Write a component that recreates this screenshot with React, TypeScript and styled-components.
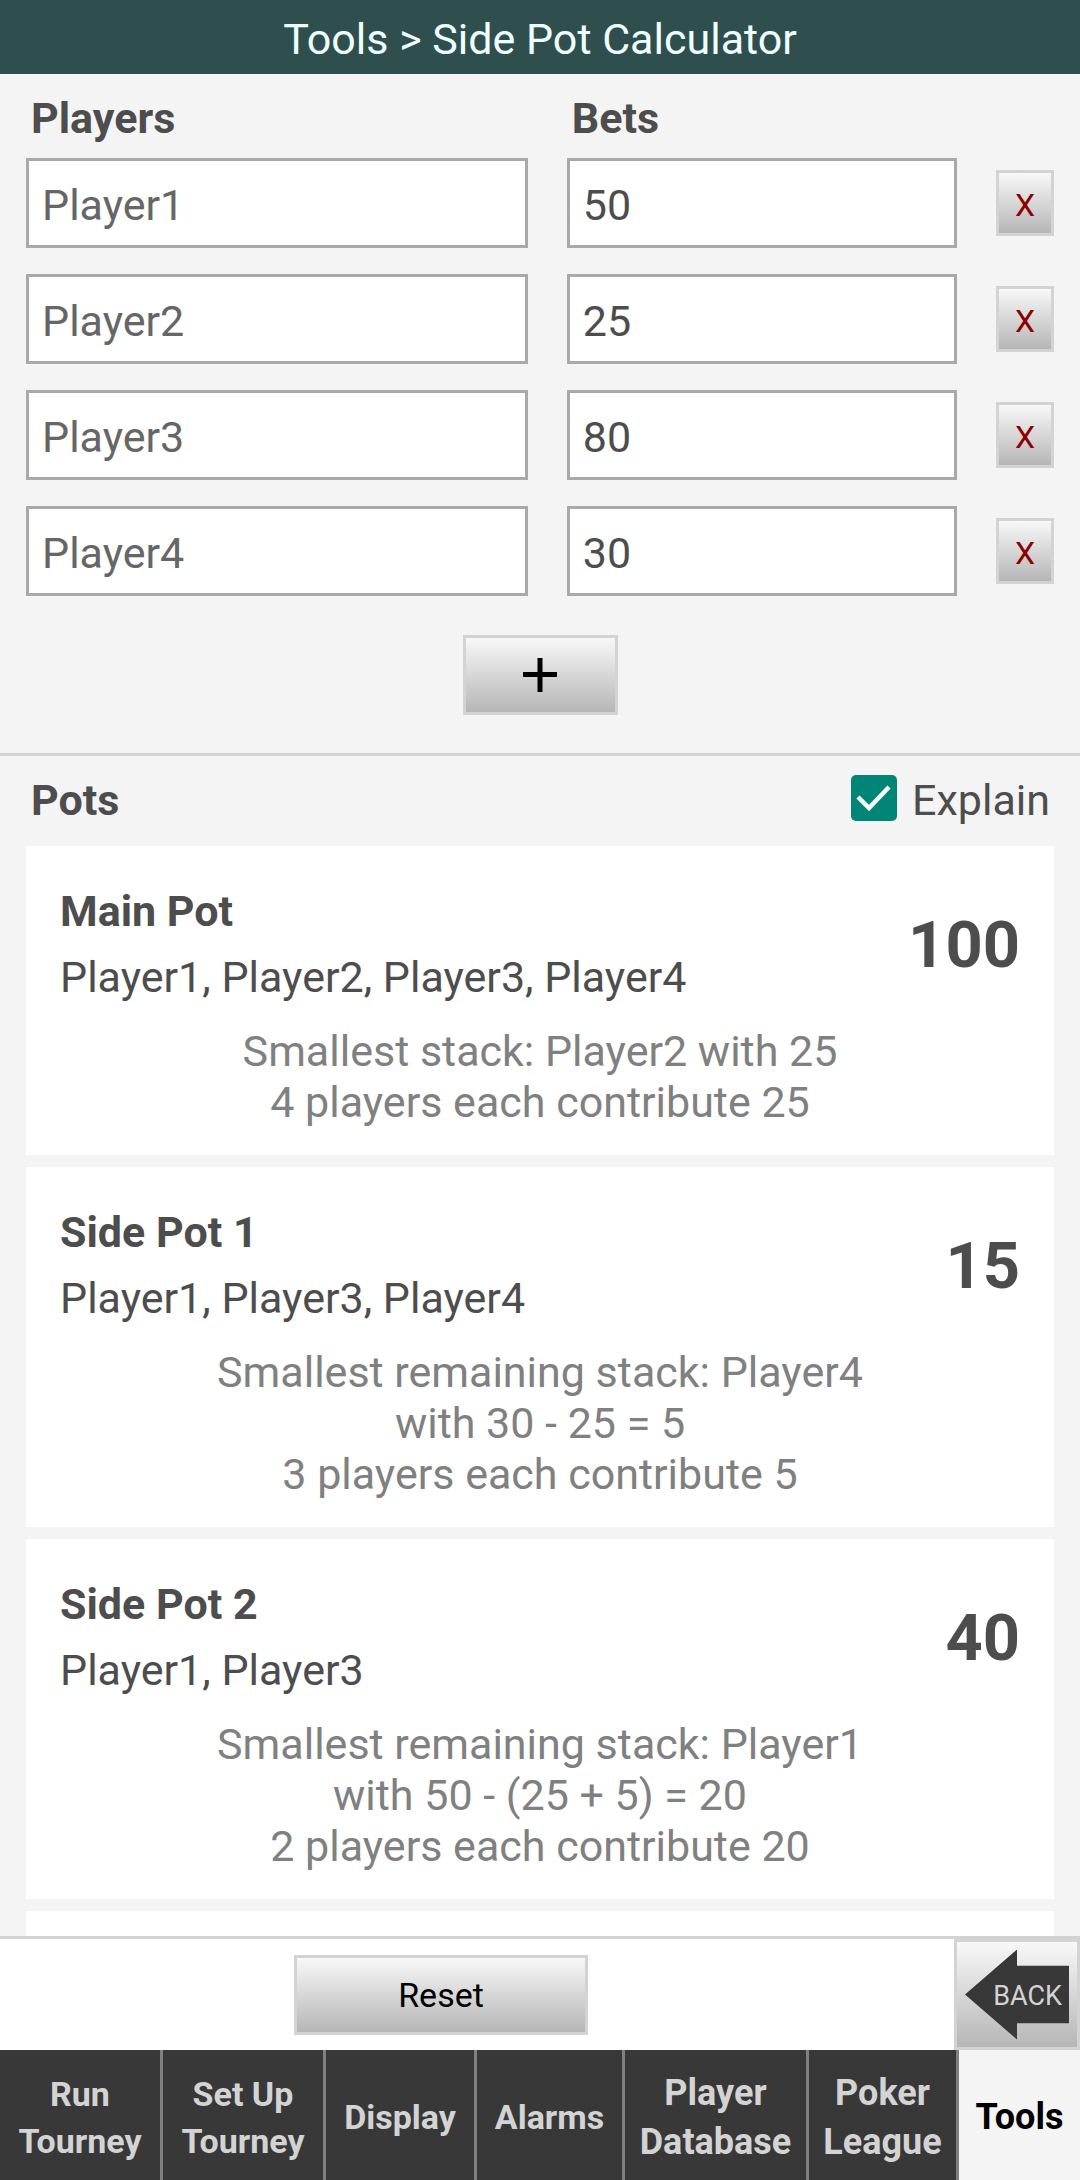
import React, { useState } from "react";
import styled, { createGlobalStyle, css } from "styled-components";

const GlobalStyle = createGlobalStyle`
  *, *::before, *::after { box-sizing: border-box; }
  body {
    margin: 0;
    background: #f4f4f4;
    color: #4d4d4d;
    font-family: Roboto, "Noto Sans", sans-serif;
    font-size: 43px;
    line-height: 51px;
  }
  button, input { font: inherit; margin: 0; border-radius: 0; }
`;

const Screen = styled.div`
  display: flex;
  flex-direction: column;
  height: 100vh;
`;

const TitleBar = styled.header`
  flex: none;
  padding: 14px 24px 10px;
  background: #2f4f4f;
  text-align: center;
`;

const Title = styled.h1`
  margin: 0;
  font: inherit;
  line-height: 50px;
  color: #f0ffff;
`;

const Content = styled.main`
  flex: 1;
  min-height: 0;
  overflow-y: auto;
  scrollbar-width: none;
`;

const BetsSection = styled.section`
  display: flex;
  flex-direction: column;
  padding: 18px 26px 38px;
  border-bottom: 3px solid #d3d3d3;
`;

const EntryGrid = styled.div`
  display: grid;
  grid-template-columns: 9fr 7fr 58px;
  column-gap: 39px;
  row-gap: 26px;
  align-items: center;
`;

const HeadingGrid = styled(EntryGrid)`
  padding-bottom: 14px;
`;

const Heading = styled.h2`
  margin: 0;
  padding-left: 5px;
  font-size: 43px;
  line-height: 52px;
  font-weight: 700;
`;

const Field = styled.input`
  width: 100%;
  min-width: 0;
  height: 90px;
  padding: 4px 13px 0;
  border: 3px solid #a9a9a9;
  background: #fff;
  color: #4d4d4d;
  outline: none;

  &::placeholder {
    color: #666;
    opacity: 1;
  }
`;

const raised = css`
  border: 3px solid #d3d3d3;
  background: linear-gradient(#f8f8f8, #b6b6b6);
  color: #000;
  cursor: pointer;
`;

const RemoveButton = styled.button`
  ${raised}
  height: 66px;
  padding: 3px 0 0;
  font-size: 32px;
  line-height: 40px;
  color: #8b0000;
`;

const AddButton = styled.button`
  ${raised}
  display: grid;
  place-items: center;
  align-self: center;
  width: 155px;
  height: 80px;
  margin-top: 39px;
  padding: 0;
`;

const PotsSection = styled.section`
  padding: 16px 26px 12px;
`;

const PotsHeader = styled.div`
  display: flex;
  align-items: center;
  justify-content: space-between;
  padding: 2px 4px 20px 0;
`;

const ExplainLabel = styled.label`
  display: flex;
  align-items: flex-start;
  gap: 15px;
  cursor: pointer;
`;

const CheckFrame = styled.span`
  display: grid;
  width: 46px;
  height: 46px;

  > * { grid-area: 1 / 1; }
`;

const CheckInput = styled.input`
  appearance: none;
  width: 46px;
  height: 46px;
  border: 5px solid #757575;
  border-radius: 5px;

  &:checked {
    border: 0;
    background: #008577;
  }
`;

const CheckMark = styled.svg`
  pointer-events: none;
`;

const PotList = styled.div`
  display: flex;
  flex-direction: column;
  gap: 12px;
`;

const PotCard = styled.article`
  padding: 40px 34px 27px;
  background: #fff;
`;

const PotTop = styled.div`
  display: flex;
  align-items: center;
  justify-content: space-between;
  gap: 24px;
`;

const PotInfo = styled.div`
  display: flex;
  flex-direction: column;
  gap: 15px;
`;

const PotName = styled.h3`
  margin: 0;
  font-size: 43px;
  line-height: 51px;
  font-weight: 700;
`;

const PotPlayers = styled.p`
  margin: 0;
`;

const PotTotal = styled.strong`
  font-size: 65px;
  line-height: 76px;
`;

const Explanation = styled.div`
  max-width: 70%;
  margin: 23px auto 0;
  text-align: center;
  color: #808080;
`;

const ExplanationLine = styled.p`
  margin: 0;
`;

const ActionBar = styled.div`
  flex: none;
  display: flex;
  border-top: 3px solid #d3d3d3;
  background: #fff;
`;

const Actions = styled.div`
  flex: 1;
  display: flex;
  align-items: center;
  justify-content: center;
  padding-right: 72px;
`;

const ResetButton = styled.button`
  ${raised}
  width: 294px;
  height: 80px;
  font-size: 34px;
  line-height: 40px;
`;

const BackButton = styled.button`
  ${raised}
  display: grid;
  place-items: center;
  width: 126px;
  height: 111px;
  padding: 0;
`;

const BackArrow = styled.span`
  width: 104px;
  height: 90px;
  padding-right: 7px;
  background: #383838;
  clip-path: polygon(0 50%, 50% 0, 50% 18%, 100% 18%, 100% 82%, 50% 82%, 50% 100%);
  color: #d3d3d3;
  font-size: 27px;
  line-height: 92px;
  text-align: right;
`;

const Tabs = styled.nav`
  flex: none;
  display: grid;
  grid-template-columns: 163fr 163fr 151fr 148fr 184fr 150fr 121fr;
  height: 130px;
  background: #383838;
`;

const Tab = styled.a<{ $active?: boolean; $large?: boolean }>`
  display: flex;
  align-items: center;
  justify-content: center;
  padding: 5px 8px 0;
  border-right: ${(p) => (p.$active ? "0" : "3px solid #808080")};
  background: ${(p) => (p.$active ? "#f4f4f4" : "#383838")};
  color: ${(p) => (p.$active ? "#000" : "#d3d3d3")};
  font-size: ${(p) => (p.$large ? "36px" : "34px")};
  line-height: ${(p) => (p.$large ? "49px" : "47px")};
  font-weight: 700;
  text-align: center;
  text-decoration: none;
`;

interface Entry {
  id: number;
  name: string;
  bet: string;
}

interface Pot {
  title: string;
  players: string[];
  total: number;
  notes: string[];
}

const initialEntries: Entry[] = [
  { id: 1, name: "", bet: "50" },
  { id: 2, name: "", bet: "25" },
  { id: 3, name: "", bet: "80" },
  { id: 4, name: "", bet: "30" },
];

const tabs = [
  { label: "Run Tourney" },
  { label: "Set Up Tourney" },
  { label: "Display" },
  { label: "Alarms" },
  { label: "Player Database", large: true },
  { label: "Poker League", large: true },
  { label: "Tools", large: true, active: true },
];

function calculatePots(entries: Entry[]): Pot[] {
  const stacks = entries.map((entry, index) => ({
    name: entry.name || `Player${index + 1}`,
    bet: Number(entry.bet) || 0,
  }));
  const levels = [...new Set(stacks.map((s) => s.bet))]
    .filter((bet) => bet > 0)
    .sort((a, b) => a - b);
  const taken: number[] = [];

  // A level reached by one player only is not contested, so it is no pot.
  return levels
    .filter((level) => stacks.filter((s) => s.bet >= level).length > 1)
    .map((level, index) => {
      const spent = taken.reduce((sum, n) => sum + n, 0);
      const share = level - spent;
      const inPot = stacks.filter((s) => s.bet >= level);
      const smallest = stacks.find((s) => s.bet === level)!;
      const deduction = taken.length > 1 ? `(${taken.join(" + ")})` : `${spent}`;
      const first =
        index === 0
          ? `Smallest stack: ${smallest.name} with ${level}`
          : `Smallest remaining stack: ${smallest.name} with ${level} - ${deduction} = ${share}`;
      taken.push(share);
      return {
        title: index === 0 ? "Main Pot" : `Side Pot ${index}`,
        players: inPot.map((s) => s.name),
        total: share * inPot.length,
        notes: [first, `${inPot.length} players each contribute ${share}`],
      };
    });
}

export default function App() {
  const [entries, setEntries] = useState(initialEntries);
  const [explain, setExplain] = useState(true);

  const update = (id: number, change: Partial<Entry>) =>
    setEntries((list) => list.map((e) => (e.id === id ? { ...e, ...change } : e)));
  const remove = (id: number) => setEntries((list) => list.filter((e) => e.id !== id));
  const add = () =>
    setEntries((list) => [
      ...list,
      { id: Math.max(0, ...list.map((e) => e.id)) + 1, name: "", bet: "" },
    ]);

  return (
    <Screen>
      <GlobalStyle />
      <TitleBar>
        <Title>Tools &gt; Side Pot Calculator</Title>
      </TitleBar>

      <Content>
        <BetsSection>
          <HeadingGrid>
            <Heading>Players</Heading>
            <Heading>Bets</Heading>
          </HeadingGrid>
          <EntryGrid>
            {entries.map((entry, index) => (
              <React.Fragment key={entry.id}>
                <Field
                  aria-label={`Name of player ${index + 1}`}
                  placeholder={`Player${index + 1}`}
                  value={entry.name}
                  onChange={(e) => update(entry.id, { name: e.target.value })}
                />
                <Field
                  aria-label={`Bet of player ${index + 1}`}
                  inputMode="numeric"
                  value={entry.bet}
                  onChange={(e) => update(entry.id, { bet: e.target.value })}
                />
                <RemoveButton
                  type="button"
                  aria-label={`Remove player ${index + 1}`}
                  onClick={() => remove(entry.id)}
                >
                  X
                </RemoveButton>
              </React.Fragment>
            ))}
          </EntryGrid>
          <AddButton type="button" aria-label="Add player" onClick={add}>
            <svg width="36" height="36" viewBox="0 0 36 36" aria-hidden="true">
              <path d="M18 1v34M1 17.5h34" stroke="#000" strokeWidth="5" />
            </svg>
          </AddButton>
        </BetsSection>

        <PotsSection>
          <PotsHeader>
            <Heading>Pots</Heading>
            <ExplainLabel>
              <CheckFrame>
                <CheckInput
                  type="checkbox"
                  checked={explain}
                  onChange={(e) => setExplain(e.target.checked)}
                />
                {explain && (
                  <CheckMark width="46" height="46" viewBox="0 0 46 46" aria-hidden="true">
                    <path d="M7 22l11 11L38 12" fill="none" stroke="#f4ffff" strokeWidth="4.5" />
                  </CheckMark>
                )}
              </CheckFrame>
              Explain
            </ExplainLabel>
          </PotsHeader>
          <PotList>
            {calculatePots(entries).map((pot) => (
              <PotCard key={pot.title}>
                <PotTop>
                  <PotInfo>
                    <PotName>{pot.title}</PotName>
                    <PotPlayers>{pot.players.join(", ")}</PotPlayers>
                  </PotInfo>
                  <PotTotal>{pot.total}</PotTotal>
                </PotTop>
                {explain && (
                  <Explanation>
                    {pot.notes.map((note) => (
                      <ExplanationLine key={note}>{note}</ExplanationLine>
                    ))}
                  </Explanation>
                )}
              </PotCard>
            ))}
            <PotCard />
          </PotList>
        </PotsSection>
      </Content>

      <ActionBar>
        <Actions>
          <ResetButton type="button" onClick={() => setEntries(initialEntries)}>
            Reset
          </ResetButton>
        </Actions>
        <BackButton type="button">
          <BackArrow>BACK</BackArrow>
        </BackButton>
      </ActionBar>

      <Tabs>
        {tabs.map((tab) => (
          <Tab
            key={tab.label}
            href="#"
            $active={tab.active}
            $large={tab.large}
            aria-current={tab.active ? "page" : undefined}
          >
            {tab.label}
          </Tab>
        ))}
      </Tabs>
    </Screen>
  );
}
